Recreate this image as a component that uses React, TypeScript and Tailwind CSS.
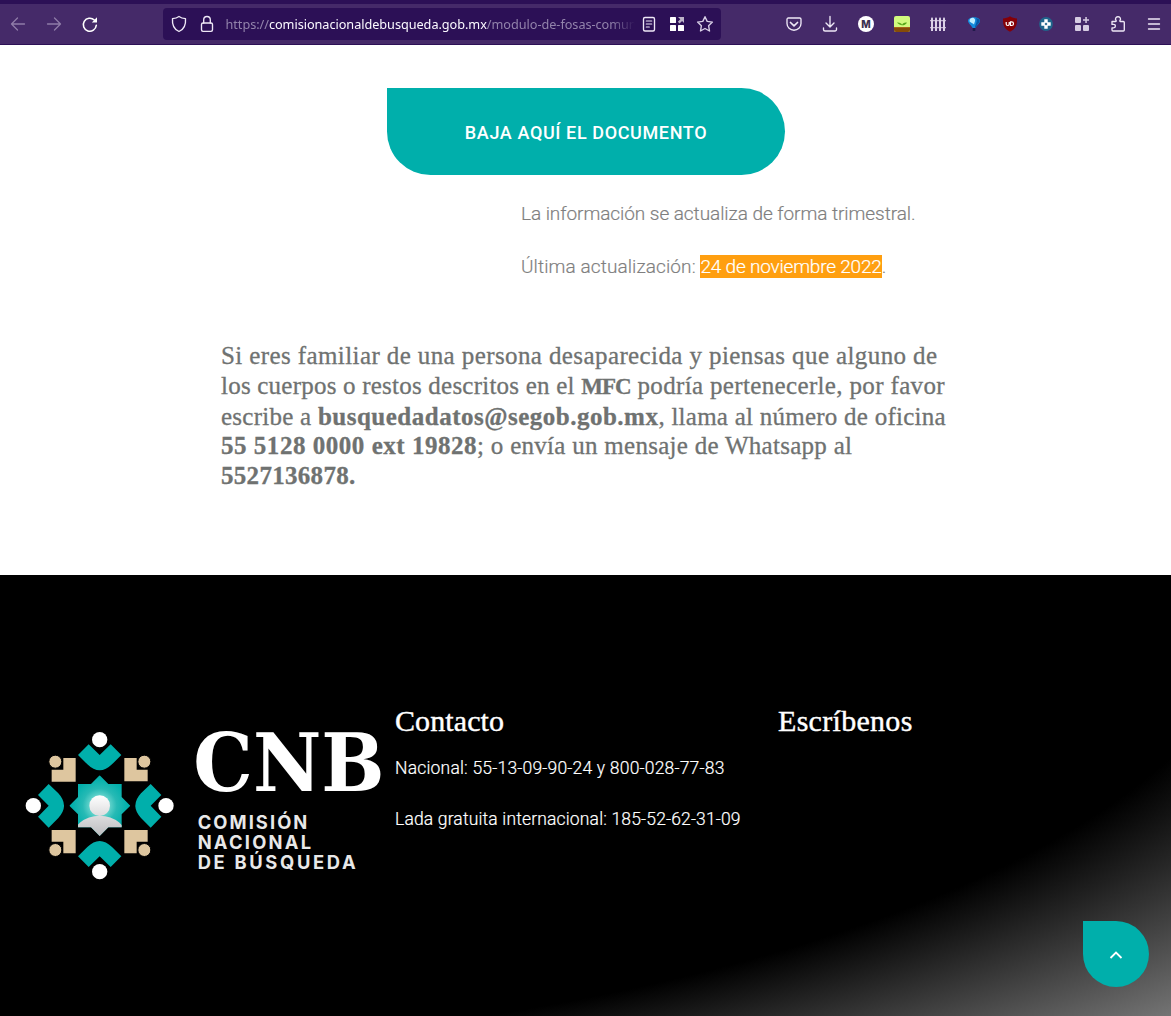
import type { ReactNode } from "react";

function Icon({ children, size = 18 }: { children: ReactNode; size?: number }) {
  return (
    <svg width={size} height={size} viewBox="0 0 18 18" fill="none" stroke="#eee8f6" strokeWidth="1.35" strokeLinecap="round" strokeLinejoin="round">
      {children}
    </svg>
  );
}

function Slot({ children }: { children: ReactNode }) {
  return <div className="flex h-10 w-9 shrink-0 items-center justify-center">{children}</div>;
}

function UrlSlot({ children }: { children: ReactNode }) {
  return <div className="flex h-8 w-7 shrink-0 items-center justify-center">{children}</div>;
}

function Toolbar() {
  return (
    <header className="h-[45px] border-t-4 border-b border-[#2c1056] bg-[#452a69]">
      <div className="flex h-10">
        <div className="flex w-[163px] shrink-0">
          <Slot>
            <Icon><path d="M15.5 9h-13M8.500 3l-6 6 6 6" stroke="#8f7ca8" strokeWidth="1.3" /></Icon>
          </Slot>
          <Slot>
            <Icon><path d="M2.500 9h13M9.500 3l6 6-6 6" stroke="#8f7ca8" strokeWidth="1.3" /></Icon>
          </Slot>
          <Slot>
            <Icon>
              <path d="M15.300 10.300A6.500 6.500 0 1 1 13.300 5" stroke="#fff" strokeWidth="1.6" />
              <path d="M16 2.300v5.200h-5.200z" fill="#fff" stroke="none" />
            </Icon>
          </Slot>
        </div>
        <div className="mt-1 flex h-8 w-[558px] shrink-0 rounded bg-[#2c1056] px-[2px]">
          <UrlSlot>
            <Icon><path d="M9 1.500c2 1.500 4 2 6.500 2.200C16 9.500 13.500 14.500 9 16.500 4.500 14.500 2 9.500 2.500 3.700 5 3.500 7 3 9 1.500z" /></Icon>
          </UrlSlot>
          <UrlSlot>
            <Icon>
              <rect x="3.500" y="8" width="11" height="8.300" rx="1.500" />
              <path d="M5.700 8V4.800a3.300 3.300 0 0 1 6.600 0V8" />
            </Icon>
          </UrlSlot>
          <div className="ml-[4px] w-[410px] shrink-0 overflow-hidden mask-r-from-[94%] pl-[0.500px] font-['Noto_Sans',sans-serif] text-[12.700px] leading-[32px] tracking-[-0.04px] whitespace-nowrap text-[#9283ab]">
            https://<span className="text-[#fbf9ff]">comisionacionaldebusqueda.gob.mx</span>/modulo-de-fosas-comun
          </div>
          <UrlSlot>
            <Icon>
              <rect x="3.500" y="2.500" width="11" height="13.500" rx="1.500" />
              <path d="M6.300 6h5.400M6.300 9h5.400M6.300 12h3" strokeWidth="1.200" />
            </Icon>
          </UrlSlot>
          <UrlSlot>
            <Icon>
              <g stroke="none" fill="#fff">
                <rect x="2" y="2" width="6" height="6" rx=".6" />
                <rect x="2" y="10" width="6" height="6" rx=".6" />
                <rect x="10" y="10" width="6" height="6" rx=".6" />
              </g>
              <path d="M10 2h6v6l-1.900-1.900L11.500 8.500 9.800 6.800l2.500-2.500z" fill="#bdb4c9" stroke="none" />
            </Icon>
          </UrlSlot>
          <UrlSlot>
            <Icon><path d="M9 1.700l2.200 4.700 5.200.7-3.800 3.600.9 5.300L9 13.500 4.500 16l.9-5.300L1.600 7.100l5.200-.7z" stroke="#d8cfe6" strokeWidth="1.400" /></Icon>
          </UrlSlot>
        </div>
        <div className="ml-[55px] flex shrink-0">
          <Slot>
            <Icon>
              <path d="M3.300 3h11.400a1.300 1.300 0 0 1 1.300 1.300V8.500a7 6.700 0 0 1-14 0V4.300A1.300 1.300 0 0 1 3.300 3z" />
              <path d="M5.500 7.500L9 10.800l3.500-3.300" strokeWidth="1.700" />
            </Icon>
          </Slot>
          <Slot>
            <Icon>
              <path d="M9 1.500v10M5 8l4 4 4-4M2.500 13v1.500A1.500 1.500 0 0 0 4 16h10a1.500 1.500 0 0 0 1.500-1.500V13" />
            </Icon>
          </Slot>
          <Slot>
            <span className="flex size-4 items-center justify-center rounded-full bg-white font-['Inter',sans-serif] text-[10px] leading-none font-extrabold text-[#3d3150]">M</span>
          </Slot>
          <Slot>
            <svg width="16" height="16" viewBox="0 0 16 16">
              <rect width="16" height="16" rx="2" fill="#d2fa7e" />
              <path d="M0 11h16v3a2 2 0 0 1-2 2H2a2 2 0 0 1-2-2z" fill="#864b08" />
              <path d="M0 11h16v1H0z" fill="#a6631a" />
              <path d="M8 9.300C6.500 9.200 4.500 8.500 3 6.500 5.500 6.200 7.500 7.200 8 8.700zM8 9c.5-1.500 2.300-2.700 5-2.300C12 8.300 10 9.300 8 9.300z" fill="#55a718" />
            </svg>
          </Slot>
          <Slot>
            <svg width="16" height="16" viewBox="0 0 16 16" fill="#dcd2e7">
              <path d="M1 2.500L2 1l1 1.500V15H1zM5 2.500L6 1l1 1.500V15H5zM9 2.500L10 1l1 1.500V15H9zM13 2.500L14 1l1 1.500V15h-2z" />
              <path d="M0 4h16v1.300H0zM0 11h16v1.300H0z" opacity=".8" />
            </svg>
          </Slot>
          <Slot>
            <svg width="16" height="16" viewBox="0 0 16 16">
              <path d="M2 5c0-5 12-5 12 0 0 2-3 4-4.700 7H6.700C5 9 2 7 2 5z" fill="#138bdc" />
              <path d="M3.500 5c0-3.500 4.500-4.300 5.500-1.500.4 1.500-.5 3-1 5-1-1.500-4.500-2-4.500-3.500z" fill="#bfefff" />
              <path d="M10 2c4 1 5 3 2 6l-3 4c0-4 3-6 1-10z" fill="#0757a5" />
              <rect x="6.700" y="12" width="2.600" height="3" fill="#211a4b" />
            </svg>
          </Slot>
          <Slot>
            <svg width="16" height="16" viewBox="0 0 16 16">
              <path d="M8 .3C10 1.700 12.500 2.400 15 2.500c.2 6-.8 10.300-7 13.300C1.800 12.800.8 8.500 1 2.500 3.500 2.400 6 1.700 8 .3z" fill="#850007" />
              <path d="M4.200 6v2a1.500 1.500 0 0 0 3 0V6M8.500 5.900h1.200a1.800 1.800 0 0 1 0 3.600H8.500z" fill="none" stroke="#fff" strokeWidth="1.200" />
            </svg>
          </Slot>
          <Slot>
            <svg width="16" height="16" viewBox="0 0 16 16">
              <circle cx="8" cy="8" r="6.900" fill="#20658c" />
              <path d="M6.300 3.300h3.400v3h3v3.400h-3v3H6.300v-3h-3V6.300h3z" fill="#fff" />
              <path d="M8 6.500L9.500 8 8 9.500 6.500 8z" fill="#20658c" />
            </svg>
          </Slot>
          <Slot>
            <svg width="16" height="16" viewBox="0 0 16 16" fill="#d6cce2">
              <rect x="1" y="1" width="6" height="6" rx="1" />
              <rect x="1" y="9" width="6" height="6" rx="1" />
              <rect x="9" y="9" width="6" height="6" rx="1" />
              <path d="M11.300 1h1.500v2.300H15v1.500h-2.200V7h-1.500V4.800H9V3.300h2.300z" />
            </svg>
          </Slot>
          <Slot>
            <Icon>
              <path d="M3 6.500h3.500c.7 0 .8-.6.600-1A2.200 2.200 0 0 1 9 1.800a2.200 2.200 0 0 1 1.900 3.700c-.2.400 0 1 .6 1h2.800a1 1 0 0 1 1 1v7.500a1 1 0 0 1-1 1H4a1 1 0 0 1-1-1v-2.200h1.700a1.700 1.700 0 0 0 0-3.400H3z" />
            </Icon>
          </Slot>
          <Slot>
            <Icon><path d="M3.500 4h11M3.500 9h11M3.500 14h11" /></Icon>
          </Slot>
        </div>
      </div>
    </header>
  );
}

function Emblem() {
  return (
    <svg width="180" height="170" viewBox="0 0 540 510" className="shrink-0">
      <defs>
        <radialGradient id="glow" cx="269" cy="257" r="85" gradientUnits="userSpaceOnUse">
          <stop offset="0.3" stopColor="#6fd8d0" />
          <stop offset="0.6" stopColor="#27bab5" />
          <stop offset="1" stopColor="#00afab" />
        </radialGradient>
        <linearGradient id="silver" x1="0" y1="225" x2="0" y2="345" gradientUnits="userSpaceOnUse">
          <stop offset="0" stopColor="#fff" />
          <stop offset="1" stopColor="#bdbdc0" />
        </linearGradient>
        <clipPath id="star">
          <path d="M204 192h39l26-26 26 26h40v39l26 26-26 26v39h-40l-26 26-26-26h-39v-39l-26-26 26-26z" />
        </clipPath>
      </defs>
      <g clipPath="url(#star)">
        <rect x="170" y="160" width="200" height="195" fill="url(#glow)" />
        <ellipse cx="269" cy="357" rx="83" ry="70" fill="url(#silver)" />
      </g>
      <circle cx="269" cy="257" r="31" fill="url(#silver)" />
      <g fill="#00afab">
        <path d="M236 73l33 32 33-32 32 32-28 28q-37 36-74 0l-28-28z" />
        <path d="M236 441l33-32 33 32 32-32-28-28q-37-36-74 0l-28 28z" />
        <path d="M84 225l32 32-32 33 32 33 29-29q34-37 0-74l-29-28z" />
        <path d="M454 225l-32 32 32 33-32 33-29-29q-34-37 0-74l29-28z" />
      </g>
      <g fill="#fff">
        <circle cx="269" cy="59" r="23" />
        <circle cx="269" cy="455" r="23" />
        <circle cx="70" cy="257" r="23" />
        <circle cx="468" cy="257" r="23" />
      </g>
      <g fill="#dec69f">
        <path d="M160 114h37v71h-72v-36h35zM343 114h37v35h33v35h-70zM125 330h72v70h-37v-35h-35zM343 330h70v35h-33v35h-37z" />
      </g>
      <g fill="#dec69f" stroke="#000" strokeWidth="3">
        <circle cx="136" cy="125" r="19.500" />
        <circle cx="403" cy="125" r="19.500" />
        <circle cx="136" cy="390" r="19.500" />
        <circle cx="403" cy="390" r="19.500" />
      </g>
    </svg>
  );
}

function Wordmark() {
  return (
    <svg width="205" height="170" viewBox="0 0 615 510" className="-ml-[5px] shrink-0 overflow-visible">
      <text x="25" y="213" fill="#fff" fontFamily="DejaVu Serif" fontWeight="700" fontSize="240" textLength="574" lengthAdjust="spacingAndGlyphs">CNB</text>
      <g fill="#e8e8e8" fontFamily="Inter" fontWeight="700" fontSize="55">
        <text x="38" y="326" textLength="329">COMISIÓN</text>
        <text x="38" y="387" textLength="340">NACIONAL</text>
        <text x="38" y="447" textLength="474">DE BÚSQUEDA</text>
      </g>
    </svg>
  );
}

export default function App() {
  return (
    <div className="flex h-[1016px] w-[1171px] flex-col overflow-hidden bg-white">
      <Toolbar />
      <main className="h-[530px] pt-[43px]">
        <button className="ml-[387px] flex h-[87px] w-[398px] items-center justify-center rounded-[44px] rounded-tl-none bg-[#00afab] pt-[2px] font-['Roboto',sans-serif] text-[18px] font-medium tracking-[0.62px] whitespace-nowrap text-white">
          BAJA AQUÍ EL DOCUMENTO
        </button>
        <div className="mt-[25px] ml-[521px] font-['Roboto',sans-serif] text-[19px] leading-[27px] font-light whitespace-nowrap text-[#7f7f7f] [-webkit-text-stroke:0.2px]">
          <p className="tracking-[-0.06px]">La información se actualiza de forma trimestral.</p>
          <p className="mt-[26px] tracking-[0.1px]">
            Última actualización: <span className="bg-[#ff9f10] tracking-[-0.2px] text-white">24 de noviembre 2022</span>.
          </p>
        </div>
        <div className="mt-[61px] ml-[221px] font-['Liberation_Serif',serif] text-[25px] leading-[29.800px] whitespace-nowrap text-[#6f7271] [-webkit-text-stroke:0.3px]">
          <p className="tracking-[0.4px]">Si eres familiar de una persona desaparecida y piensas que alguno de</p>
          <p className="tracking-[0.22px]">
            los cuerpos o restos descritos en el <b className="text-[23px] tracking-[-0.9px]">MFC</b>
            <span className="tracking-[0.35px]"> podría pertenecerle, por favor</span>
          </p>
          <p className="tracking-[0.25px]">escribe a <b className="tracking-[0.5px]">busquedadatos@segob.gob.mx</b>, llama al número de oficina</p>
          <p className="tracking-[0.28px]"><b className="tracking-[0.53px]">55 5128 0000 ext 19828</b>; o envía un mensaje de Whatsapp al</p>
          <p className="tracking-[0.3px]"><b>5527136878.</b></p>
        </div>
      </main>
      <footer className="relative flex h-[441px] bg-[radial-gradient(ellipse_farthest-corner_at_top_left,#000_76.500%,#747474_100%)] pl-[10px] text-white">
        <div className="mt-[145px] flex w-[385px] shrink-0">
          <Emblem />
          <Wordmark />
        </div>
        <section className="mt-[128px] w-[383px] whitespace-nowrap">
          <h2 className="font-['Liberation_Serif',serif] text-[30px] leading-[36px] tracking-[0.1px] [-webkit-text-stroke:0.4px]">Contacto</h2>
          <p className="mt-[16px] font-['Roboto',sans-serif] text-[17.500px] leading-[26px] font-light tracking-[0.2px] [-webkit-text-stroke:0.2px]">Nacional: 55-13-09-90-24 y 800-028-77-83</p>
          <p className="mt-[25px] font-['Roboto',sans-serif] text-[17.500px] leading-[26px] font-light tracking-[0.16px] [-webkit-text-stroke:0.2px]">Lada gratuita internacional: 185-52-62-31-09</p>
        </section>
        <section className="mt-[128px]">
          <h2 className="font-['Liberation_Serif',serif] text-[30px] leading-[36px] tracking-[0.3px] [-webkit-text-stroke:0.4px]">Escríbenos</h2>
        </section>
        <button className="absolute right-[22px] bottom-[29px] flex size-[66px] items-center justify-center rounded-full rounded-tl-none bg-[#00afab]" aria-label="Subir">
          <svg width="14" height="10" viewBox="0 0 14 10" fill="none" stroke="#fff" strokeWidth="1.800" className="mt-[2px]">
            <path d="M1.500 8L7 2.500 12.500 8" />
          </svg>
        </button>
      </footer>
    </div>
  );
}
